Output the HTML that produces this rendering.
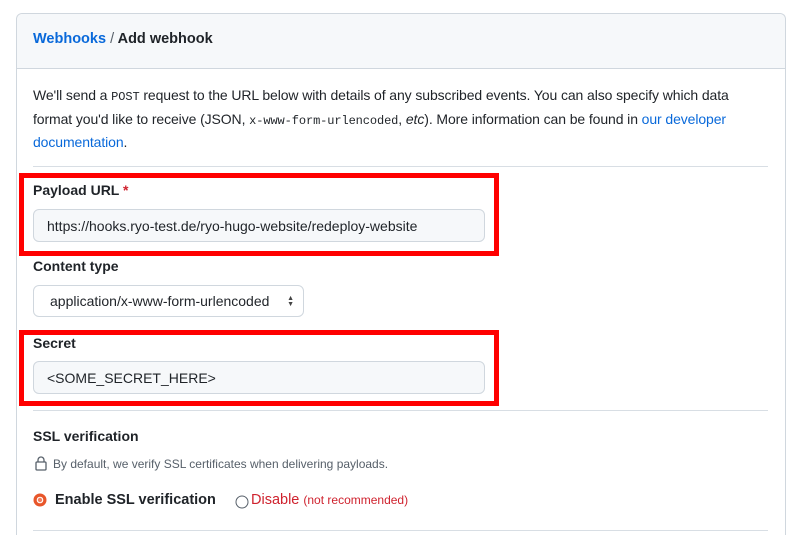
<!DOCTYPE html>
<html><head><meta charset="utf-8"><style>
*{margin:0;padding:0;box-sizing:border-box}
html,body{width:800px;height:535px;overflow:hidden}
body{background:#fff;font-family:"Liberation Sans",sans-serif;color:#1f2328;position:relative;font-size:14px}
.a{position:absolute}
.box{left:16px;top:13px;width:770px;height:522px;border:1px solid #d0d7de;border-bottom:none;border-radius:6px 6px 0 0}
.hdr{left:17px;top:14px;width:768px;height:55px;background:#f6f8fa;border-bottom:1px solid #d0d7de;border-radius:6px 6px 0 0}
a{color:#0969da;text-decoration:none}
.lbl{font-weight:bold;font-size:14px}
.inp{background:#f6f8fa;border:1px solid #d0d7de;border-radius:6px;padding-left:13px;font-size:14px;display:flex;align-items:center}
.hr{left:33px;width:735px;height:1px;background:#d8dee4}
.red{border:5px solid #f00}
code{font-family:"Liberation Mono",monospace;font-size:12px}
</style></head><body>
<div class="a box"></div>
<div class="a hdr"></div>
<div class="a" style="left:33px;top:31px;font-size:14.5px;font-weight:bold"><a>Webhooks</a> <span style="color:#57606a;font-weight:normal">/</span> Add webhook</div>
<div class="a" style="left:33px;top:85px;width:728px;line-height:21.5px;font-size:14px;letter-spacing:-0.1px">We'll send a <code>POST</code> request to the URL below with details of any subscribed events. You can also specify which data format you'd like to receive (JSON, <code>x-www-form-urlencoded</code>, <i>etc</i>). More information can be found in <a>our developer documentation</a>.</div>
<div class="a hr" style="top:166px"></div>
<div class="a red" style="left:19px;top:173px;width:480px;height:83px"></div>
<div class="a lbl" style="left:33px;top:182px">Payload URL <span style="color:#cf222e">*</span></div>
<div class="a inp" style="left:33px;top:209px;width:452px;height:33px">https://hooks.ryo-test.de/ryo-hugo-website/redeploy-website</div>
<div class="a lbl" style="left:33px;top:258px">Content type</div>
<div class="a inp" style="left:33px;top:285px;width:271px;height:32px;background:#fff;padding-left:16px">application/x-www-form-urlencoded<span style="position:absolute;right:9px;top:10px;font-size:7px;line-height:6px;color:#444">▲<br>▼</span></div>
<div class="a red" style="left:19px;top:330px;width:480px;height:76px"></div>
<div class="a lbl" style="left:33px;top:335px">Secret</div>
<div class="a inp" style="left:33px;top:361px;width:452px;height:33px">&lt;SOME_SECRET_HERE&gt;</div>
<div class="a hr" style="top:410px"></div>
<div class="a lbl" style="left:33px;top:428px">SSL verification</div>
<svg class="a" style="left:35px;top:456px" width="12" height="15" viewBox="0 0 12 15"><rect x="1" y="6" width="10" height="8" rx="1" fill="none" stroke="#57606a" stroke-width="1.3"/><path d="M3 6V4a3 3 0 0 1 6 0v2" fill="none" stroke="#57606a" stroke-width="1.3"/></svg>
<div class="a" style="left:53px;top:457px;font-size:12px;color:#57606a">By default, we verify SSL certificates when delivering payloads.</div>
<svg class="a" style="left:33px;top:493px" width="14" height="14"><circle cx="7" cy="7" r="6.5" fill="#e8562a"/><circle cx="7" cy="7" r="3.3" fill="#fff"/><circle cx="7" cy="7" r="2.2" fill="#f08060"/></svg>
<div class="a lbl" style="left:55px;top:492px;font-size:14.5px">Enable SSL verification</div>
<svg class="a" style="left:235px;top:495px" width="14" height="14"><circle cx="7" cy="7" r="6" fill="#fff" stroke="#57606a"/></svg>
<div class="a" style="left:251px;top:492px;font-size:14.5px;color:#cf222e">Disable <span style="font-size:12px">(not recommended)</span></div>
<div class="a hr" style="top:530px"></div>
</body></html>
